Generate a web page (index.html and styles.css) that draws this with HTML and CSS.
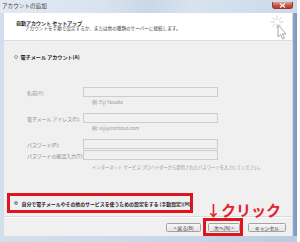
FILE: index.html
```html
<!DOCTYPE html>
<html lang="ja">
<head>
<meta charset="utf-8">
<link rel="stylesheet" href="styles.css">
</head>
<body>
<div class="window">
  <div class="titlebar">
    <span class="title">アカウントの追加</span>
    <span class="close"><svg width="7" height="5" viewBox="0 0 7 5"><path d="M1 0.5 L6 4.5 M6 0.5 L1 4.5" stroke="#fff" stroke-width="1.1"/></svg></span>
  </div>
  <div class="frame-body">
    <div class="client">
      <div class="header">
        <div class="header-text">
          <div class="h-title">自動アカウント セットアップ</div>
          <div class="h-sub">アカウントを手動で設定するか、または他の種類のサーバーに接続します。</div>
        </div>
        <svg class="cursor" width="18" height="25" viewBox="0 0 18 25">
          <g stroke="#b8bcc4" stroke-width="0.7" stroke-linecap="round">
            <path d="M7 1 V4.5 M7 9.5 V13 M1 7 H4.5 M9.5 7 H13 M2.8 2.8 L5 5 M11.2 2.8 L9 5 M2.8 11.2 L5 9 M11.2 11.2 L9.5 9.5"/>
          </g>
          <path d="M8 10 L8 22 L10.6 19.6 L12.6 24 L14.3 23.2 L12.4 18.9 L16 18.9 Z" fill="#fff" stroke="#8e939b" stroke-width="0.8" stroke-linejoin="round"/>
        </svg>
      </div>
      <div class="content">
        <div class="radio-row">
          <span class="radio"></span>
          <span class="radio-label">電子メール アカウント(A)</span>
        </div>
        <div class="form">
          <div class="row field r-name"><span class="label">名前(Y):</span><span class="input"></span></div>
          <div class="row hint r-hint1">例: Eiji Yasuda</div>
          <div class="row field"><span class="label">電子メール アドレス(E):</span><span class="input"></span></div>
          <div class="row hint r-hint2">例: eiji@contoso.com</div>
          <div class="row field"><span class="label">パスワード(P):</span><span class="input"></span></div>
          <div class="row field r-confirm"><span class="label">パスワードの確認入力(T):</span><span class="input"></span></div>
          <div class="row hint r-note">インターネット サービス プロバイダーから提供されたパスワードを入力してください。</div>
        </div>
        <div class="manual">
          <span class="radio checked"></span>
          <span class="manual-label">自分で電子メールやその他のサービスを使うための設定をする (手動設定)(M)</span>
        </div>
      </div>
      <div class="sep"></div>
      <div class="buttons">
        <span class="btn btn-back">&lt; 戻る(B)</span>
        <span class="highlight"><span class="btn btn-next">次へ(N) &gt;</span></span>
        <span class="btn btn-cancel">キャンセル</span>
      </div>
      <div class="annotation">↓クリック</div>
    </div>
    <div class="right-edge"></div>
  </div>
</div>
</body>
</html>
```

FILE: styles.css
```css
* { box-sizing: border-box; }
html, body {
  margin: 0;
  padding: 0;
  background: #ffffff;
  width: 300px;
  height: 242px;
  overflow: hidden;
  font-family: "Noto Sans CJK JP", "Noto Sans", sans-serif;
}
.window {
  width: 297px;
  height: 242px;
  display: flex;
  flex-direction: column;
  background: linear-gradient(90deg, #d3dfec 0%, #c8d7e8 60%, #b9cbe1 100%);
}
.titlebar {
  height: 13px;
  display: flex;
  align-items: flex-start;
  padding-left: 2px;
  background: linear-gradient(100deg, #e2eaf3 0%, #d9e3ee 35%, #c9d7e8 50%, #d8e3ef 65%, #cbd9ea 100%);
}
.title {
  font-size: 5.6px;
  line-height: 13px;
  color: #3b3b3b;
}
.close {
  margin-left: auto;
  margin-right: 4px;
  margin-top: 2px;
  width: 21px;
  height: 7px;
  display: flex;
  align-items: center;
  justify-content: center;
  border: 1px solid #8f3a33;
  border-top: none;
  border-radius: 0 0 3px 3px;
  background: linear-gradient(#e2a69d, #cf5a4e 50%, #b8342a);
}
.close svg { display: block; }
.frame-body {
  flex: 1;
  display: flex;
  padding-left: 4px;
  padding-bottom: 6px;
}
.client {
  position: relative;
  width: 288px;
  background: #f0f0f0;
  display: flex;
  flex-direction: column;
}
.right-edge {
  flex: 1;
  background: linear-gradient(90deg, #d2d9e2 0px, #d2d9e2 1px, #8fa6c8 1px, #7c95bd 100%);
}
.header {
  height: 28px;
  background: #ffffff;
  border-bottom: 1px solid #d5dce4;
  display: flex;
  padding: 7px 0 0 12px;
}
.h-title {
  font-size: 5px;
  line-height: 6px;
  font-weight: bold;
  color: #1c1c1c;
}
.h-sub {
  font-size: 4.6px;
  line-height: 5px;
  padding-left: 9px;
  color: #3c3c3c;
  white-space: nowrap;
}
.cursor {
  margin-left: auto;
  margin-right: 4px;
  margin-top: -5px;
}
.content {
  padding-top: 13px;
}
.radio-row {
  display: flex;
  align-items: center;
  height: 6px;
  padding-left: 10px;
}
.radio {
  width: 4px;
  height: 4px;
  border-radius: 50%;
  border: 0.8px solid #9a9a9a;
  background: #f4f4f4;
  flex: none;
}
.radio.checked {
  border-color: #7e8a98;
  background: radial-gradient(circle, #3a6fb0 0 45%, #e8eef5 55%);
}
.radio-label {
  margin-left: 2.5px;
  font-size: 5.1px;
  line-height: 6px;
  font-weight: bold;
  color: #262626;
  white-space: nowrap;
}
.form {
  margin-top: 27px;
  padding-left: 23px;
}
.row {
  display: flex;
  align-items: center;
  white-space: nowrap;
}
.field { height: 10px; }
.label {
  width: 56px;
  flex: none;
  font-size: 4.9px;
  color: #8a8a8a;
}
.input {
  width: 135px;
  height: 10px;
  border: 1px solid #cdcdcd;
  background: #f0f0f0;
}
.hint {
  padding-left: 65px;
  font-size: 4.8px;
  color: #969696;
  align-items: flex-start;
  line-height: 10px;
}
.r-hint1 { height: 16px; }
.r-hint2 { height: 16px; }
.r-confirm { margin-top: 1px; }
.r-note {
  margin-top: 2px;
  font-size: 4.35px;
  height: 10px;
}
.manual {
  margin-top: 21px;
  margin-left: 3px;
  width: 186px;
  height: 20px;
  border: 3px solid #e0141e;
  display: flex;
  align-items: center;
  padding-left: 4px;
}
.manual-label {
  margin-left: 3.5px;
  font-size: 4.9px;
  font-weight: bold;
  color: #262626;
  white-space: nowrap;
}
.sep {
  margin-top: 3px;
  height: 2px;
  border-top: 1px solid #dadada;
  border-bottom: 1px solid #fbfbfb;
}
.buttons {
  display: flex;
  justify-content: flex-end;
  align-items: center;
  height: 18px;
  padding-right: 6px;
}
.btn {
  height: 9px;
  display: flex;
  align-items: center;
  justify-content: center;
  font-size: 4.9px;
  color: #333;
  border: 1px solid #a3a3a3;
  border-radius: 1.5px;
  background: linear-gradient(#f6f6f6, #e4e4e4);
  white-space: nowrap;
}
.btn-back { width: 35px; margin-right: 2px; }
.highlight {
  width: 40px;
  height: 18px;
  border: 3px solid #e0141e;
  display: flex;
  align-items: center;
  padding-left: 2px;
}
.btn-next { width: 32px; }
.btn-cancel { width: 38px; margin-left: 5px; }
.annotation {
  position: absolute;
  left: 202px;
  top: 189px;
  font-size: 15px;
  line-height: 15px;
  font-weight: bold;
  color: #e3232b;
  white-space: nowrap;
}
```
